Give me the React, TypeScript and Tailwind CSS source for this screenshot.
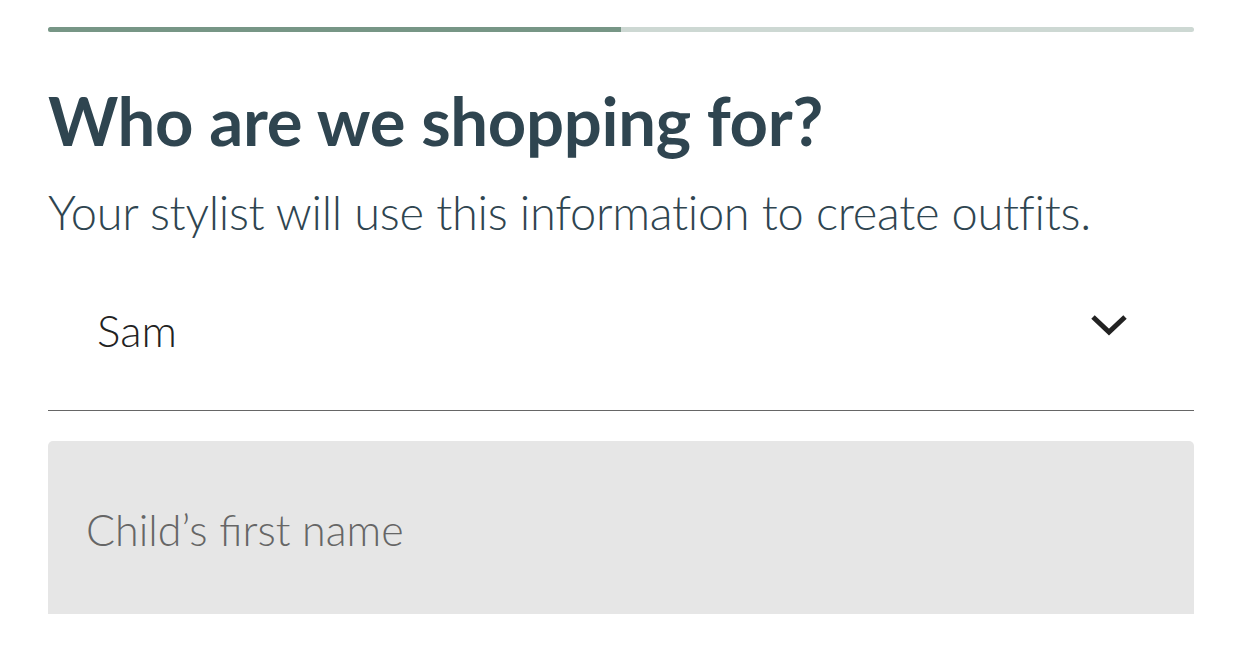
export default function App() {
  return (
    <main
      className="min-h-screen bg-white px-[48px] pt-[27px]"
      style={{ fontFamily: "Lato, 'Open Sans', sans-serif" }}
    >
      <div className="flex h-[5px] w-full overflow-hidden rounded-full bg-[#cdd8d3]">
        <div className="h-full w-1/2 bg-[#779686]" />
      </div>

      <h1 className="mt-[46px] text-[67px] font-bold leading-[84px] tracking-[-0.3px] text-[#2f4550]">
        Who are we shopping for?
      </h1>
      <p className="mt-[20px] text-[47px] font-light leading-[60px] tracking-[-0.3px] text-[#2f4550]">
        Your stylist will use this information to create outfits.
      </p>

      <div className="mt-[39px] flex h-[130px] items-center justify-between border-b border-[#666] pb-[32px] pl-[49px] pr-[66px]">
        <span className="text-[44px] font-light text-[#222]">Sam</span>
        <svg className="mb-[10px]" width="38" height="24" viewBox="0 0 38 24" fill="none">
          <path d="M3 4 L19 19 L35 4" stroke="#222" strokeWidth="5" />
        </svg>
      </div>

      <div className="mt-[30px] flex h-[173px] items-center rounded-t-[5px] bg-[#e6e6e6] pl-[38px] pt-[6px]">
        <span className="text-[43px] font-light text-[#666]">Child’s first name</span>
      </div>
    </main>
  );
}
